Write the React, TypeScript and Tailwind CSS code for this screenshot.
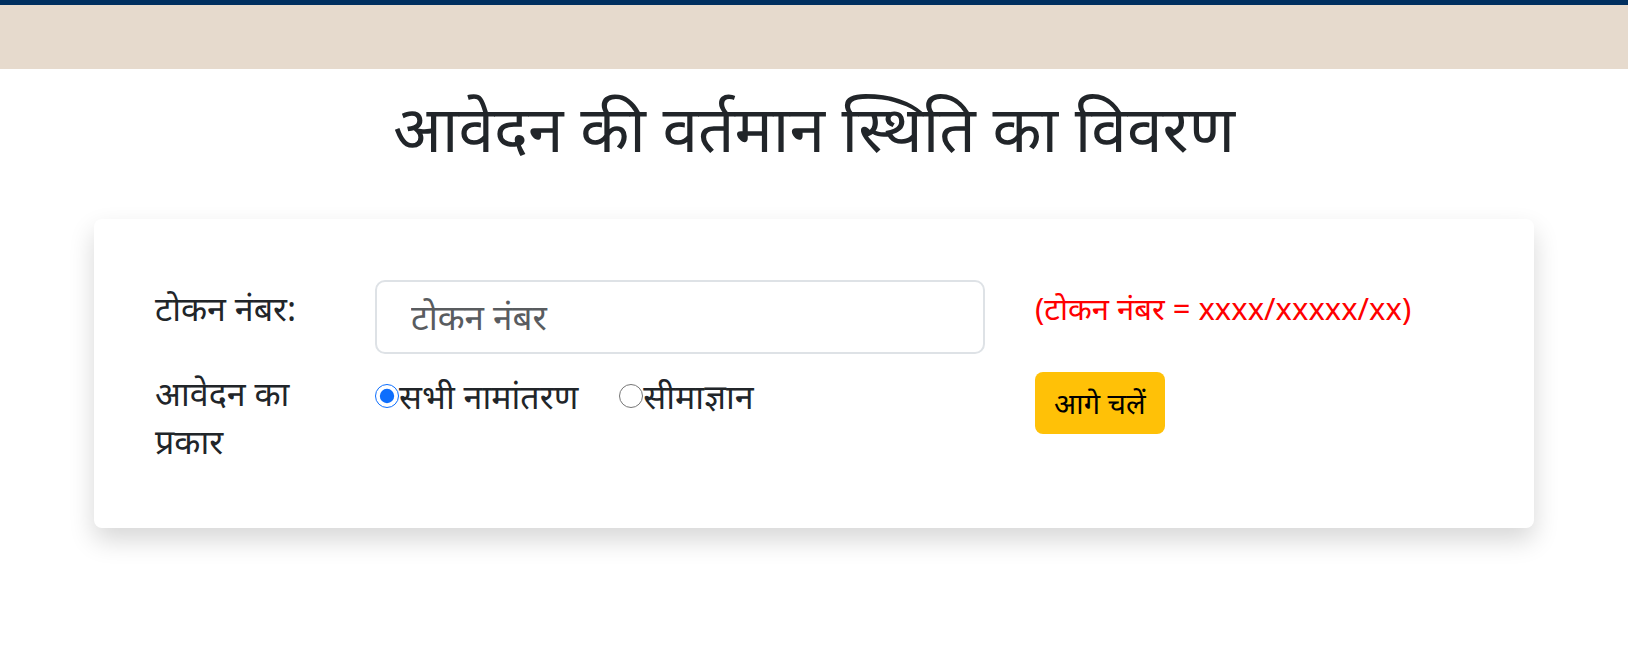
import React from 'react';

export default function App() {
  return (
    <div className="min-h-screen bg-white font-['Noto_Sans','Noto_Sans_Devanagari','Liberation_Sans',sans-serif] text-[#212529]">
      {/* Header strip */}
      <div className="h-[5px] bg-[#002f5f]" />
      <div className="h-[64px] bg-[#e6dacd]" />

      {/* Title */}
      <h1 className="mt-[21px] text-center text-[64px] leading-[1.2] font-normal">
        आवेदन की वर्तमान स्थिति का विवरण
      </h1>

      {/* Card */}
      <div className="mx-[94px] mt-[52px] rounded-lg bg-white px-[61px] pt-[61px] pb-[63px] shadow-[0_12px_26px_rgba(0,0,0,0.16)]">
        <div className="grid grid-cols-[170px_610px_1fr] gap-x-[50px] gap-y-[15px] text-[34px] leading-[48px]">
          <label className="pt-[4px]">टोकन नंबर:</label>
          <input
            type="text"
            placeholder="टोकन नंबर"
            className="h-[74px] w-full rounded-[10px] border-2 border-[#dee2e6] px-[34px] text-[35px] text-[#212529] outline-none placeholder:text-[#595c5f]"
          />
          <span className="pt-[4px] text-[31px] text-[#ff0000]">(टोकन नंबर = xxxx/xxxxx/xx)</span>

          <label className="whitespace-nowrap">
            आवेदन का
            <br />
            प्रकार
          </label>
          <div className="flex items-start gap-[41px] pt-[3px]">
            <label className="flex items-center whitespace-nowrap">
              <input type="radio" name="type" defaultChecked className="m-0 h-[24px] w-[24px] accent-[#0d6efd]" />
              <span>सभी नामांतरण</span>
            </label>
            <label className="flex items-center whitespace-nowrap">
              <input type="radio" name="type" className="m-0 h-[24px] w-[24px] accent-[#0d6efd]" />
              <span>सीमाज्ञान</span>
            </label>
          </div>
          <div className="pt-[3px]">
            <button className="h-[62px] rounded-[8px] bg-[#ffc107] px-[19px] text-[29px] leading-none text-black">
              आगे चलें
            </button>
          </div>
        </div>
      </div>
    </div>
  );
}
